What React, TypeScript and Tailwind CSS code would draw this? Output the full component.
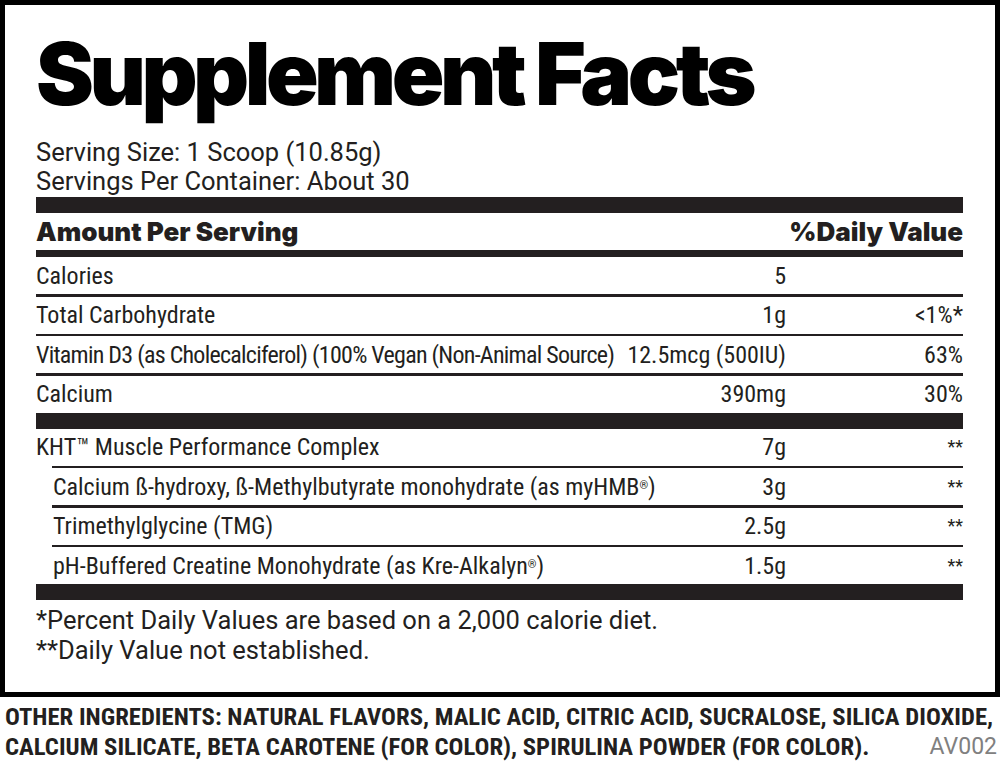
const ROWS_TOP = [
  { name: 'Calories', amount: '5', dv: '', line: true },
  { name: 'Total Carbohydrate', amount: '1g', dv: '<1%*', line: true },
  { name: 'Vitamin D3 (as Cholecalciferol) (100% Vegan (Non-Animal Source)', amount: '12.5mcg (500IU)', dv: '63%', line: true, tight: true },
  { name: 'Calcium', amount: '390mg', dv: '30%', line: false },
];

const cond = "font-['Liberation_Sans_Narrow','Roboto_Condensed',sans-serif]";

function Row({ name, amount, dv, indent, tight }: { name: React.ReactNode; amount: string; dv: React.ReactNode; indent?: boolean; tight?: boolean }) {
  return (
    <div className={`flex items-center gap-[11px] h-[37px] text-[24px] text-[#231f20] ${cond} ${indent ? 'pl-[17px]' : ''}`}>
      <div className={`flex-1 min-w-0 whitespace-nowrap ${tight ? 'tracking-[-0.031em]' : ''}`}>{name}</div>
      <div className="shrink-0 text-right whitespace-nowrap">{amount}</div>
      <div className="w-[166px] shrink-0 text-right whitespace-nowrap">{dv}</div>
    </div>
  );
}

const Stars = () => <span className="text-[18px] relative top-[-2px]">**</span>;

export default function App() {
  return (
    <div className="w-[1000px] h-[777px] bg-white overflow-hidden">
      <div className="h-[697px] border-[5px] border-black pl-[31px] pr-[32px]">
        <h1 className="mt-[25px] text-[87px] leading-[87px] font-black tracking-[-0.052em] text-black font-['Inter',sans-serif]">
          Supplement Facts
        </h1>
        <div className="mt-[21px] text-[25.5px] leading-[29px] text-[#231f20] font-['Roboto',sans-serif]">
          <div>Serving Size: 1 Scoop (10.85g)</div>
          <div>Servings Per Container: About 30</div>
        </div>
        <div className="mt-[1px] h-[16px] bg-[#231f20]" />
        <div className="flex items-center justify-between h-[37px] text-[26px] font-black text-[#231f20] font-['Inter',sans-serif]">
          <span>Amount Per Serving</span>
          <span>%Daily Value</span>
        </div>
        <div className="h-[7px] bg-[#231f20]" />
        {ROWS_TOP.map((r) => (
          <div key={r.name}>
            <Row name={r.name} amount={r.amount} dv={r.dv} tight={r.tight} />
            {r.line && <div className="h-[2.5px] bg-[#231f20]" />}
          </div>
        ))}
        <div className="h-[16px] bg-[#231f20]" />
        <Row name={<>KHT™ Muscle Performance Complex</>} amount="7g" dv={<Stars />} />
        <div className="ml-[16px] h-[2.5px] bg-[#231f20]" />
        <Row indent name={<>Calcium ß-hydroxy, ß-Methylbutyrate monohydrate (as myHMB<sup className="text-[11px]">®</sup>)</>} amount="3g" dv={<Stars />} />
        <div className="ml-[16px] h-[2.5px] bg-[#231f20]" />
        <Row indent name="Trimethylglycine (TMG)" amount="2.5g" dv={<Stars />} />
        <div className="ml-[16px] h-[2.5px] bg-[#231f20]" />
        <Row indent name={<>pH-Buffered Creatine Monohydrate (as Kre-Alkalyn<sup className="text-[11px]">®</sup>)</>} amount="1.5g" dv={<Stars />} />
        <div className="h-[16px] bg-[#231f20]" />
        <div className="mt-[5px] text-[25.5px] leading-[30px] text-[#231f20] font-['Roboto',sans-serif]">
          <div>*Percent Daily Values are based on a 2,000 calorie diet.</div>
          <div>**Daily Value not established.</div>
        </div>
      </div>
      <div className={`pl-[5px] pt-[5px] text-[24.7px] leading-[30px] font-bold text-[#231f20] ${cond}`}>
        <div className="whitespace-nowrap">OTHER INGREDIENTS: NATURAL FLAVORS, MALIC ACID, CITRIC ACID, SUCRALOSE, SILICA DIOXIDE,</div>
        <div className="flex items-end justify-between pr-[3px]">
          <span className="whitespace-nowrap">CALCIUM SILICATE, BETA CAROTENE (FOR COLOR), SPIRULINA POWDER (FOR COLOR).</span>
          <span className="font-normal text-[23px] text-[#808080] font-['Roboto',sans-serif]">AV002</span>
        </div>
      </div>
    </div>
  );
}
